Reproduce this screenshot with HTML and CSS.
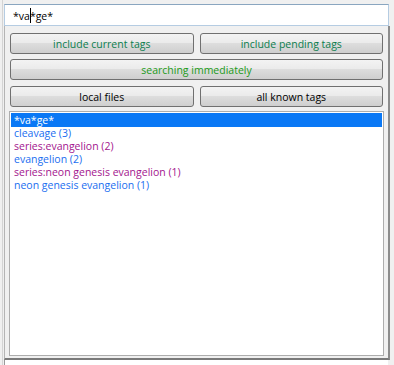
FILE: index.html
```html
<!DOCTYPE html>
<html lang="en">
<head>
  <meta charset="UTF-8">
  <title>Tag autocomplete</title>
  <link rel="stylesheet" href="styles.css">
</head>
<body>
  <div class="window">
    <div class="search">
      <span class="query">*va<span class="caret"></span>*ge*</span>
    </div>

    <div class="dropdown">
      <div class="row">
        <button class="btn green">include current tags</button>
        <button class="btn green">include pending tags</button>
      </div>
      <div class="row second">
        <button class="btn bright">searching immediately</button>
      </div>
      <div class="row third">
        <button class="btn">local files</button>
        <button class="btn">all known tags</button>
      </div>

      <ul class="results">
        <li class="selected">*va*ge*</li>
        <li class="tag">cleavage (3)</li>
        <li class="series">series:evangelion (2)</li>
        <li class="tag">evangelion (2)</li>
        <li class="series">series:neon genesis evangelion (1)</li>
        <li class="tag">neon genesis evangelion (1)</li>
      </ul>
    </div>

    <div class="below"></div>
  </div>
</body>
</html>
```

FILE: styles.css
```css
body {
  margin: 0;
  width: 394px;
  height: 365px;
  overflow: hidden;
  background: #f0f0f0;
  font-family: "Open Sans", "Noto Sans", sans-serif;
  font-size: 10.5px;
}
.window {
  height: 365px;
  padding-top: 4px;
  box-sizing: border-box;
  border-left: 1px solid #d4d4d4;
  margin-left: 2px;
  display: flex;
  flex-direction: column;
}
.search {
  margin: 0 5px 0 1px;
  height: 22px;
  box-sizing: border-box;
  border: 1px solid #b5cce2;
  border-top-color: #8aa6c0;
  background: white;
  padding: 3px 0 0 8px;
  color: #000;
  line-height: 14px;
}
.caret {
  display: inline-block;
  width: 1px;
  height: 15px;
  background: #000;
  vertical-align: -3px;
  margin-right: -1px;
}
.dropdown {
  margin-left: 1px;
  width: 386px;
  height: 334px;
  box-sizing: border-box;
  border-left: 1px solid #b4b4b4;
  border-right: 2px solid #8c8c8c;
  border-bottom: 2px solid #7a7a7a;
  padding: 7px 5px 0 5px;
  display: flex;
  flex-direction: column;
}
.row {
  display: flex;
  gap: 6px;
}
.row.second {
  margin-top: 5px;
}
.row.third {
  margin-top: 6px;
}
.btn {
  flex: 1;
  height: 21px;
  border: 1px solid #707070;
  border-radius: 3px;
  background: linear-gradient(#f3f3f3, #ebebeb 45%, #dddddd 50%, #cfcfcf);
  font-family: inherit;
  font-size: 10.5px;
  color: #000;
  padding: 0;
}
.btn.green {
  color: #0b7e4e;
}
.btn.bright {
  color: #1b9a18;
}
.results {
  list-style: none;
  margin: 4px -1px 0 -1px;
  padding: 1px;
  flex: 1;
  margin-bottom: 2px;
  background: white;
  border: 1px solid #adadad;
  line-height: 13px;
}
.results li {
  height: 13px;
  padding-left: 3px;
  white-space: nowrap;
}
.results .selected {
  background: #0a78f5;
  color: white;
  height: 14px;
  line-height: 14px;
}
.tag {
  color: #1a6ef0;
}
.series {
  color: #a3148e;
}
.below {
  flex: 1;
  margin-left: 1px;
  margin-right: 6px;
  background: white;
  border-left: 1px solid #9a9a9a;
}
```
